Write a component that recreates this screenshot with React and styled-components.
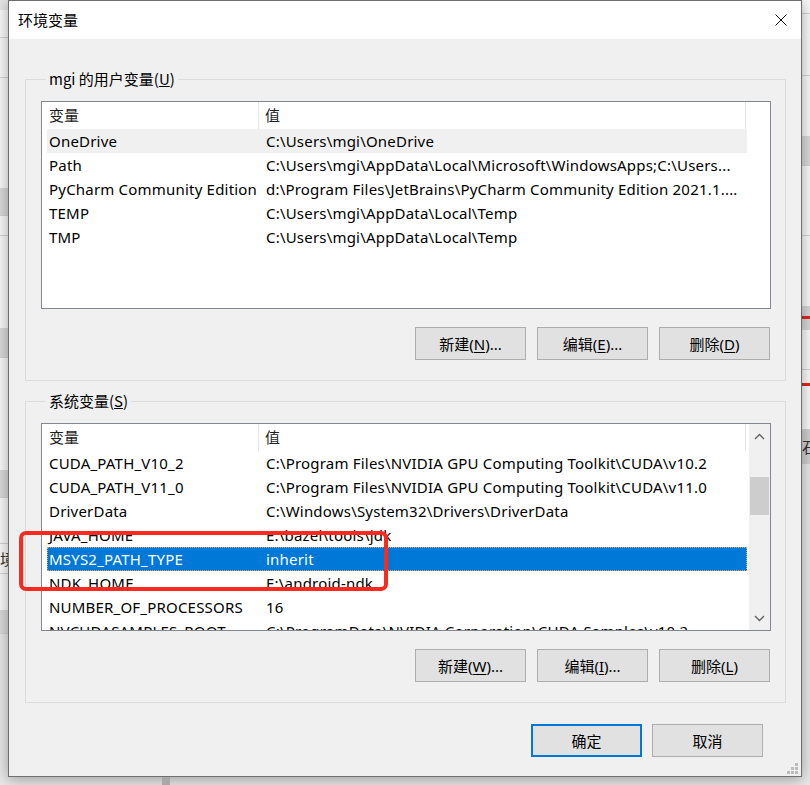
import React from "react";
import styled, { createGlobalStyle } from "styled-components";

const userVars = [
  { name: "OneDrive", value: "C:\\Users\\mgi\\OneDrive", hover: true },
  {
    name: "Path",
    value: "C:\\Users\\mgi\\AppData\\Local\\Microsoft\\WindowsApps;C:\\Users...",
  },
  {
    name: "PyCharm Community Edition",
    value: "d:\\Program Files\\JetBrains\\PyCharm Community Edition 2021.1....",
  },
  { name: "TEMP", value: "C:\\Users\\mgi\\AppData\\Local\\Temp" },
  { name: "TMP", value: "C:\\Users\\mgi\\AppData\\Local\\Temp" },
];

const systemVars = [
  { name: "CUDA_PATH_V10_2", value: "C:\\Program Files\\NVIDIA GPU Computing Toolkit\\CUDA\\v10.2" },
  { name: "CUDA_PATH_V11_0", value: "C:\\Program Files\\NVIDIA GPU Computing Toolkit\\CUDA\\v11.0" },
  { name: "DriverData", value: "C:\\Windows\\System32\\Drivers\\DriverData" },
  { name: "JAVA_HOME", value: "E:\\bazel\\tools\\jdk" },
  { name: "MSYS2_PATH_TYPE", value: "inherit", selected: true },
  { name: "NDK_HOME", value: "E:\\android-ndk" },
  { name: "NUMBER_OF_PROCESSORS", value: "16" },
  { name: "NVCUDASAMPLES_ROOT", value: "C:\\ProgramData\\NVIDIA Corporation\\CUDA Samples\\v10.2" },
];

// desktop stuff peeking out behind the dialog
const leftBands = [
  { h: 10, bg: "#e6e6e6" },
  { h: 28, bg: "#fafafa", line: true },
  { h: 40, bg: "#fafafa", line: true },
  { h: 110, bg: "#fafafa" },
  { h: 28, bg: "#dadada", line: true },
  { h: 20, bg: "#fafafa", line: true },
  { h: 92, bg: "#fafafa" },
  { h: 30, bg: "#dadada", line: true },
  { h: 112, bg: "#fafafa" },
  { h: 28, bg: "#dadada", line: true },
  { h: 46, bg: "#fafafa", line: true },
  { h: 30, bg: "#fafafa", text: "境", line: true },
  { h: 36, bg: "#fafafa" },
  { h: 24, bg: "#dadada", line: true },
];

const rightBands = [
  { h: 14, bg: "#fafafa", line: true },
  { h: 62, bg: "#fafafa", line: true },
  { h: 60, bg: "#fafafa" },
  { h: 30, bg: "#dadada", line: true },
  { h: 70, bg: "#fafafa", line: true },
  { h: 70, bg: "#fafafa" },
  { h: 24, bg: "#d8d8d8", red: true },
  { h: 40, bg: "#fafafa", line: true },
  { h: 30, bg: "#fafafa", red: true },
  { h: 30, bg: "#fafafa", line: true },
  { h: 34, bg: "#d0d0d0", text: "石日" },
];

const GlobalStyle = createGlobalStyle`
  * { box-sizing: border-box; }
  html, body { margin: 0; padding: 0; }
  body {
    width: 810px;
    height: 785px;
    overflow: hidden;
    background: #e8e8e8;
    font-family: "Noto Sans", "Noto Sans CJK SC", sans-serif;
    font-size: 15px;
    color: #000;
  }
`;

const Screen = styled.div`
  position: relative;
  width: 810px;
  height: 785px;
  display: flex;
  justify-content: space-between;
`;

const Pane = styled.div`
  width: 8px;
  display: flex;
  flex-direction: column;
  overflow: hidden;
`;

const Band = styled.div`
  flex: none;
  height: ${(p) => p.h}px;
  background: ${(p) => p.bg};
  border-bottom: 1px solid ${(p) => (p.line ? "#d4d4d4" : "transparent")};
  font-family: "Noto Sans CJK SC", sans-serif;
  font-size: 15px;
  line-height: ${(p) => p.h}px;
  color: #333;
  white-space: nowrap;
  display: flex;
  align-items: center;

  &::before {
    content: "";
    display: ${(p) => (p.red ? "block" : "none")};
    width: 100%;
    height: 3px;
    background: #e8231b;
  }
`;

const Window = styled.div`
  position: absolute;
  left: 8px;
  top: 0;
  width: 794px;
  height: 777px;
  border: 1px solid #6f6f6f;
  background: #f0f0f0;
  box-shadow: 0 2px 14px rgba(0, 0, 0, 0.35);
  display: flex;
  flex-direction: column;
`;

const TitleBar = styled.div`
  height: 38px;
  flex: none;
  background: #fff;
  display: flex;
  align-items: center;
  padding-left: 9px;
`;

const Title = styled.div`
  font-family: "Noto Sans CJK SC", sans-serif;
  font-size: 15px;
  margin-top: -1px;
`;

const CloseButton = styled.div`
  margin-left: auto;
  width: 40px;
  height: 38px;
  display: flex;
  align-items: center;
  justify-content: center;
`;

const Body = styled.div`
  flex: 1;
  display: flex;
  flex-direction: column;
  padding: 30px 15px 0 16px;
`;

const Group = styled.fieldset`
  margin: 0 0 ${(p) => p.gap}px 0;
  padding: 12px 14px 20px 15px;
  border: 1px solid #dcdcdc;
  min-width: 0;
`;

const Legend = styled.legend`
  font-family: "Noto Sans CJK SC", sans-serif;
  font-size: 15px;
  line-height: 20px;
  height: 20px;
  padding: 0 3px;
  margin-left: 5px;
  color: #000;
`;

const ListView = styled.div`
  height: 208px;
  border: 1px solid #828790;
  background: #fff;
  display: flex;
  overflow: hidden;
`;

const ListBody = styled.div`
  flex: 1;
  min-width: 0;
  overflow: hidden;
`;

const Header = styled.div`
  height: 27px;
  display: flex;
`;

const HeaderCell = styled.div`
  width: ${(p) => p.w}px;
  flex: none;
  padding-left: ${(p) => p.pad}px;
  border-right: 1px solid #e5e5e5;
  font-family: "Noto Sans CJK SC", sans-serif;
  font-size: 15px;
  line-height: 26px;
  color: #1e1e1e;
`;

const Row = styled.div`
  width: 700px;
  height: 24px;
  margin-left: 5px;
  display: flex;
  align-items: center;
  letter-spacing: 0.2px;
  background: ${(p) => (p.selected ? "#0078d7" : p.hover ? "#f0f0f0" : "transparent")};
  color: ${(p) => (p.selected ? "#fff" : "#000")};
  outline: ${(p) => (p.selected ? "1px dotted #e8a85a" : "none")};
  outline-offset: -1px;
`;

const NameCell = styled.div`
  width: 212px;
  flex: none;
  padding-left: 2px;
  white-space: nowrap;
  overflow: hidden;
`;

const ValueCell = styled.div`
  flex: 1;
  min-width: 0;
  padding-left: 7px;
  white-space: nowrap;
  overflow: hidden;
`;

const ScrollBar = styled.div`
  width: 22px;
  flex: none;
  background: #f0f0f0;
  display: flex;
  flex-direction: column;
  border-left: 1px solid #fff;
`;

const ScrollArrow = styled.div`
  height: 24px;
  display: flex;
  align-items: center;
  justify-content: center;
`;

const ScrollTrack = styled.div`
  flex: 1;
  padding: 29px 1px 0 1px;
`;

const Thumb = styled.div`
  height: 38px;
  background: #cdcdcd;
`;

const ButtonRow = styled.div`
  display: flex;
  justify-content: flex-end;
  gap: 11px;
  margin-top: 18px;
  padding-right: 1px;
`;

const Button = styled.div`
  width: 111px;
  height: 33px;
  background: #e1e1e1;
  border: ${(p) => (p.primary ? "2px solid #0078d7" : "1px solid #adadad")};
  display: flex;
  align-items: center;
  justify-content: center;
  font-family: "Noto Sans", "Noto Sans CJK SC", sans-serif;
  font-size: 15px;
  color: #000;

  u {
    text-decoration-thickness: 1px;
    text-underline-offset: 2px;
  }
`;

const Footer = styled.div`
  display: flex;
  justify-content: flex-end;
  gap: 10px;
  padding: 21px 23px 0 0;
`;

const Grip = styled.svg`
  position: absolute;
  right: 2px;
  bottom: 2px;
`;

const Annotation = styled.div`
  position: absolute;
  left: 19px;
  top: 531px;
  width: 369px;
  height: 60px;
  border: 4px solid #fb2a1e;
  border-radius: 7px;
`;

const BottomMark = styled.div`
  position: absolute;
  left: 162px;
  top: 777px;
  width: 8px;
  height: 8px;
  background: #a8a8a8;
`;

const Chevron = ({ down }) => (
  <svg width="11" height="7" viewBox="0 0 11 7">
    <polyline
      points={down ? "1,1 5.5,5.5 10,1" : "1,6 5.5,1.5 10,6"}
      fill="none"
      stroke="#606060"
      strokeWidth="1.4"
    />
  </svg>
);

const VarList = ({ rows, scroll }) => (
  <ListView>
    <ListBody>
      <Header>
        <HeaderCell w={217} pad={7}>变量</HeaderCell>
        <HeaderCell w={487} pad={6}>值</HeaderCell>
      </Header>
      {rows.map((r) => (
        <Row key={r.name} selected={r.selected} hover={r.hover}>
          <NameCell>{r.name}</NameCell>
          <ValueCell>{r.value}</ValueCell>
        </Row>
      ))}
    </ListBody>
    {scroll && (
      <ScrollBar>
        <ScrollArrow>
          <Chevron />
        </ScrollArrow>
        <ScrollTrack>
          <Thumb />
        </ScrollTrack>
        <ScrollArrow>
          <Chevron down />
        </ScrollArrow>
      </ScrollBar>
    )}
  </ListView>
);

const Buttons = ({ keys }) => (
  <ButtonRow>
    <Button>
      新建(<u>{keys[0]}</u>)...
    </Button>
    <Button>
      编辑(<u>{keys[1]}</u>)...
    </Button>
    <Button>
      删除(<u>{keys[2]}</u>)
    </Button>
  </ButtonRow>
);

export default function App() {
  return (
    <>
      <GlobalStyle />
      <Screen>
        <Pane>
          {leftBands.map((b, i) => (
            <Band key={i} {...b}>
              {b.text}
            </Band>
          ))}
        </Pane>
        <Pane>
          {rightBands.map((b, i) => (
            <Band key={i} {...b}>
              {b.text}
            </Band>
          ))}
        </Pane>

        <Window>
          <TitleBar>
            <Title>环境变量</Title>
            <CloseButton>
              <svg width="12" height="12" viewBox="0 0 12 12">
                <path d="M0.5 0.5 L11.5 11.5 M11.5 0.5 L0.5 11.5" stroke="#111" strokeWidth="1" />
              </svg>
            </CloseButton>
          </TitleBar>
          <Body>
            <Group gap={10}>
              <Legend>
                mgi 的用户变量(<u>U</u>)
              </Legend>
              <VarList rows={userVars} />
              <Buttons keys={["N", "E", "D"]} />
            </Group>
            <Group gap={0}>
              <Legend>
                系统变量(<u>S</u>)
              </Legend>
              <VarList rows={systemVars} scroll />
              <Buttons keys={["W", "I", "L"]} />
            </Group>
            <Footer>
              <Button primary>确定</Button>
              <Button>取消</Button>
            </Footer>
          </Body>
          <Grip width="12" height="11" viewBox="0 0 12 11">
            <g fill="#bcbcbc">
              <rect x="8" y="0" width="3" height="3" />
              <rect x="4" y="4" width="3" height="3" />
              <rect x="8" y="4" width="3" height="3" />
              <rect x="0" y="8" width="3" height="3" />
              <rect x="4" y="8" width="3" height="3" />
              <rect x="8" y="8" width="3" height="3" />
            </g>
          </Grip>
        </Window>

        <Annotation />
        <BottomMark />
      </Screen>
    </>
  );
}
